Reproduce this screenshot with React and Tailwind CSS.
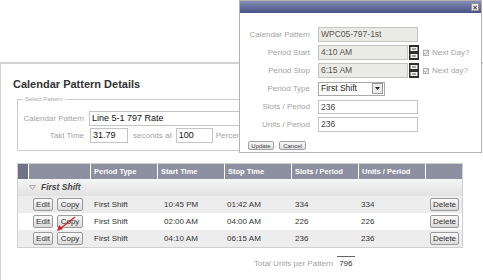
import React from 'react';

const font = { fontFamily: '"Liberation Sans", Arial, sans-serif' };

// column widths of the shift table
const cols = ['w-[10px]', 'w-[62px]', 'w-[67px]', 'w-[67px]', 'w-[67px]', 'w-[67px]', 'w-[67px]', 'w-[37px]'];

const rows = [
  { start: '10:45 PM', stop: '01:42 AM', slots: '334', units: '334', shade: true },
  { start: '02:00 AM', stop: '04:00 AM', slots: '226', units: '226', shade: false },
  { start: '04:10 AM', stop: '06:15 AM', slots: '236', units: '236', shade: true },
];

function Btn({ children, className = '' }) {
  return (
    <span
      className={`inline-flex items-center justify-center h-[13px] border border-[#9a9a9a] rounded-[2px] bg-linear-to-b from-[#fbfbfb] to-[#dadada] text-[8px] leading-none text-[#333] ${className}`}
    >
      {children}
    </span>
  );
}

function SmallBtn({ children, className = '' }) {
  return (
    <span
      className={`inline-flex items-center justify-center h-[9px] border border-[#a0a0a0] rounded-[2px] bg-linear-to-b from-[#fafafa] to-[#dedede] text-[6px] leading-none text-[#444] ${className}`}
    >
      {children}
    </span>
  );
}

function CalIcon() {
  return (
    <svg width="10" height="15" viewBox="0 0 10 15" className="ml-[1px]">
      <rect x="0" y="0" width="10" height="15" fill="#2e2e2e" />
      <rect x="1.5" y="2" width="7" height="4" fill="#f2f2f2" />
      <rect x="1.5" y="9" width="7" height="4" fill="#f2f2f2" />
      <rect x="3" y="3.5" width="4" height="1" fill="#555" />
      <rect x="3" y="10.5" width="4" height="1" fill="#555" />
    </svg>
  );
}

function Check({ label }) {
  return (
    <div className="flex items-center ml-[4px]">
      <span className="relative w-[6px] h-[6px] border border-[#b0b0b0] bg-[#f4f4f4]">
        <svg width="6" height="6" viewBox="0 0 6 6" className="absolute -left-px -top-px">
          <path d="M1 3 L2.5 4.5 L5 1.2" stroke="#9a9a9a" strokeWidth="0.9" fill="none" />
        </svg>
      </span>
      <span className="ml-[3px] text-[8px] text-[#a5a5a5]">{label}</span>
    </div>
  );
}

function DlgRow({ label, children }) {
  return (
    <div className="flex items-center h-[15px]">
      <div className="w-[70px] text-right text-[8px] text-[#a3a3a3]">{label}</div>
      <div className="ml-[8px] flex items-center">{children}</div>
    </div>
  );
}

function Dialog() {
  return (
    <div className="absolute left-[239px] top-0 w-[243px] border border-[#b3b3b3] bg-white pb-[2px]">
      <div className="h-[12px] bg-linear-to-b from-[#858db2] to-[#4a5387] flex items-center justify-end pr-[2px]">
        <span className="w-[8px] h-[8px] bg-[#e4e4e4] border border-[#999] flex items-center justify-center text-[7px] leading-none text-[#333] font-bold">
          ×
        </span>
      </div>
      <div className="pt-[14px] flex flex-col gap-[3px]">
        <DlgRow label="Calendar Pattern">
          <div className="w-[100px] h-[15px] border border-[#c4c4c4] bg-[#ebebe6] px-[2px] text-[8.5px] leading-[13px] text-[#555]">
            WPC05-797-1st
          </div>
        </DlgRow>
        <DlgRow label="Period Start">
          <div className="w-[90px] h-[15px] border border-[#c4c4c4] bg-[#ebebe6] px-[2px] text-[8.5px] leading-[13px] text-[#555]">
            4:10 AM
          </div>
          <CalIcon />
          <Check label="Next Day?" />
        </DlgRow>
        <DlgRow label="Period Stop">
          <div className="w-[90px] h-[15px] border border-[#c4c4c4] bg-[#ebebe6] px-[2px] text-[8.5px] leading-[13px] text-[#555]">
            6:15 AM
          </div>
          <CalIcon />
          <Check label="Next day?" />
        </DlgRow>
        <DlgRow label="Period Type">
          <div className="w-[67px] h-[14px] border border-[#a8a8a8] bg-white flex items-center justify-between pl-[2px] pr-px">
            <span className="text-[8.5px] text-[#222]">First Shift</span>
            <span className="w-[11px] h-[11px] border border-[#999] bg-[#ececec] flex items-center justify-center">
              <svg width="5" height="3" viewBox="0 0 5 3">
                <path d="M0 0 L5 0 L2.5 3 Z" fill="#222" />
              </svg>
            </span>
          </div>
        </DlgRow>
        <DlgRow label="Slots / Period">
          <div className="w-[100px] h-[14px] border border-[#c4c4c4] bg-white px-[2px] text-[8.5px] leading-[12px] text-[#444]">
            236
          </div>
        </DlgRow>
        <DlgRow label="Units / Period">
          <div className="w-[100px] h-[15px] border border-[#c4c4c4] bg-white px-[2px] text-[8.5px] leading-[13px] text-[#444]">
            236
          </div>
        </DlgRow>
      </div>
      <div className="flex gap-[5px] pl-[8px] mt-[9px]">
        <SmallBtn className="w-[26px]">Update</SmallBtn>
        <SmallBtn className="w-[27px]">Cancel</SmallBtn>
      </div>
    </div>
  );
}

function ShiftTable() {
  const headers = ['', '', 'Period Type', 'Start Time', 'Stop Time', 'Slots / Period', 'Units / Period', ''];
  return (
    <div className="ml-[16px] mt-[12px] w-[446px] border border-[#cfcfcf]">
      <div className="flex h-[15px]">
        {headers.map((h, i) => (
          <div
            key={i}
            className={`${cols[i]} ${i === 0 ? 'bg-[#6f7384]' : 'bg-[#8c90a1] border-l border-white'} flex items-center pl-[3px] text-[7.5px] font-bold text-white`}
          >
            {h}
          </div>
        ))}
      </div>
      <div className="h-[17px] flex items-center bg-linear-to-b from-[#f5f5f5] to-[#e2e2e2] pl-[11px]">
        <svg width="7" height="5" viewBox="0 0 7 5">
          <path d="M0.5 0.5 L6.5 0.5 L3.5 4.5 Z" fill="none" stroke="#9a9a9a" strokeWidth="0.8" />
        </svg>
        <span className="ml-[5px] text-[8.5px] font-bold italic text-[#444]">First Shift</span>
      </div>
      {rows.map((r, i) => (
        <div key={i} className={`flex h-[17px] items-center text-[8px] text-[#333] ${r.shade ? 'bg-[#ededed]' : 'bg-white'}`}>
          <div className={cols[0]} />
          <div className={`${cols[1]} flex gap-[4px] pl-[5px]`}>
            <Btn className="w-[20px]">Edit</Btn>
            <Btn className="w-[26px]">Copy</Btn>
          </div>
          <div className={`${cols[2]} pl-[4px]`}>First Shift</div>
          <div className={`${cols[3]} pl-[7px]`}>{r.start}</div>
          <div className={`${cols[4]} pl-[3px]`}>{r.stop}</div>
          <div className={`${cols[5]} pl-[4px]`}>{r.slots}</div>
          <div className={`${cols[6]} pl-[3px]`}>{r.units}</div>
          <div className={`${cols[7]} pl-[5px]`}>
            <Btn className="w-[29px]">Delete</Btn>
          </div>
        </div>
      ))}
    </div>
  );
}

export default function App() {
  return (
    <div className="relative w-[483px] h-[280px] overflow-hidden bg-white" style={font}>
      <div className="mt-[62px] w-[600px] h-[240px] border-t-2 border-l border-[#d2d2d2]">
        <div className="pl-[12px] pt-[13px] text-[11px] leading-[14px] font-bold text-[#333]">
          Calendar Pattern Details
        </div>

        <fieldset className="ml-[16px] mt-[4px] w-[446px] border border-[#cdcdcd] pt-[8px] pb-[7px]">
          <legend className="ml-[5px] px-[2px] text-[6px] leading-[8px] text-[#aaa]">Select Pattern</legend>
          <div className="flex flex-col gap-[2px]">
            <div className="flex items-center h-[15px]">
              <div className="w-[66px] text-right text-[8px] text-[#a3a3a3]">Calendar Pattern</div>
              <div className="ml-[5px] w-[220px] h-[15px] border border-[#c4c4c4] px-[2px] text-[9px] leading-[13px] text-[#111]">
                Line 5-1 797 Rate
              </div>
            </div>
            <div className="flex items-center h-[15px]">
              <div className="w-[66px] text-right text-[8px] text-[#a3a3a3]">Takt Time</div>
              <div className="ml-[6px] w-[38px] h-[15px] border border-[#c4c4c4] px-[2px] text-[9px] leading-[13px] text-[#111]">
                31.79
              </div>
              <span className="ml-[5px] text-[8px] text-[#a3a3a3]">seconds at</span>
              <div className="ml-[4px] w-[37px] h-[15px] border border-[#c4c4c4] px-[2px] text-[9px] leading-[13px] text-[#111]">
                100
              </div>
              <span className="ml-[3px] text-[8px] text-[#a3a3a3]">Percent</span>
            </div>
          </div>
        </fieldset>

        <ShiftTable />

        <div className="ml-[253px] mt-[8px] flex items-end gap-[4px]">
          <span className="text-[8px] leading-[10px] text-[#a3a3a3]">Total Units per Pattern</span>
          <span className="border-t border-[#666] px-[2px] pt-[2px] text-[8px] leading-[10px] text-[#333]">796</span>
        </div>
      </div>

      <svg className="absolute left-0 top-0" width="483" height="280" style={{ pointerEvents: 'none' }}>
        <line x1="75" y1="217" x2="61" y2="228" stroke="#d42222" strokeWidth="1.2" />
        <path d="M57 231 L59 225 L63 229 Z" fill="#d42222" />
      </svg>

      <Dialog />
    </div>
  );
}
